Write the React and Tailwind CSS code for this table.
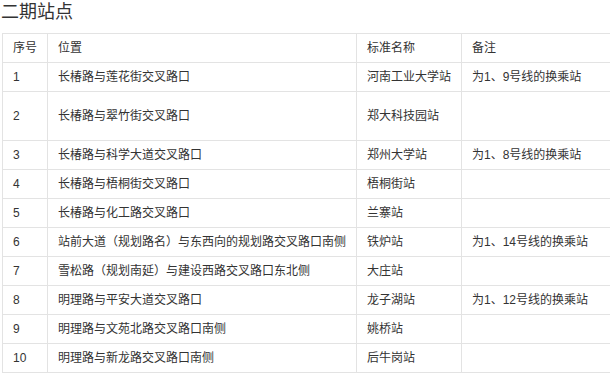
const rows = [
  ['1', '长椿路与莲花街交叉路口', '河南工业大学站', '为1、9号线的换乘站', 'h-[29px]'],
  ['2', '长椿路与翠竹街交叉路口', '郑大科技园站', '', 'h-[49px]'],
  ['3', '长椿路与科学大道交叉路口', '郑州大学站', '为1、8号线的换乘站', 'h-[29px]'],
  ['4', '长椿路与梧桐街交叉路口', '梧桐街站', '', 'h-[29px]'],
  ['5', '长椿路与化工路交叉路口', '兰寨站', '', 'h-[29px]'],
  ['6', '站前大道（规划路名）与东西向的规划路交叉路口南侧', '铁炉站', '为1、14号线的换乘站', 'h-[29px]'],
  ['7', '雪松路（规划南延）与建设西路交叉路口东北侧', '大庄站', '', 'h-[29px]'],
  ['8', '明理路与平安大道交叉路口', '龙子湖站', '为1、12号线的换乘站', 'h-[29px]'],
  ['9', '明理路与文苑北路交叉路口南侧', '姚桥站', '', 'h-[29px]'],
  ['10', '明理路与新龙路交叉路口南侧', '后牛岗站', '', 'h-[29px]'],
];

const cell = 'border border-[#e3e3e3] px-[10px] align-middle';

export default function App() {
  return (
    <div
      className="w-[610px] h-[373px] overflow-hidden bg-white text-[#333]"
      style={{ fontFamily: '"Liberation Sans", "Noto Sans CJK SC", sans-serif' }}
    >
      <h2 className="h-[33px] pl-[1px] text-[18px] leading-[24px] font-normal">二期站点</h2>
      <table className="ml-[2px] w-[640px] table-fixed border-collapse text-[12px] leading-[16px]">
        <colgroup>
          <col className="w-[45px]" />
          <col className="w-[309px]" />
          <col className="w-[105px]" />
          <col />
        </colgroup>
        <thead>
          <tr className="h-[29px]">
            <td className={cell}>序号</td>
            <td className={cell}>位置</td>
            <td className={cell}>标准名称</td>
            <td className={cell}>备注</td>
          </tr>
        </thead>
        <tbody>
          {rows.map(([n, loc, name, note, h]) => (
            <tr key={n} className={h}>
              <td className={cell}>{n}</td>
              <td className={cell + ' whitespace-nowrap'}>{loc}</td>
              <td className={cell}>{name}</td>
              <td className={cell + ' whitespace-nowrap'}>{note}</td>
            </tr>
          ))}
        </tbody>
      </table>
    </div>
  );
}
